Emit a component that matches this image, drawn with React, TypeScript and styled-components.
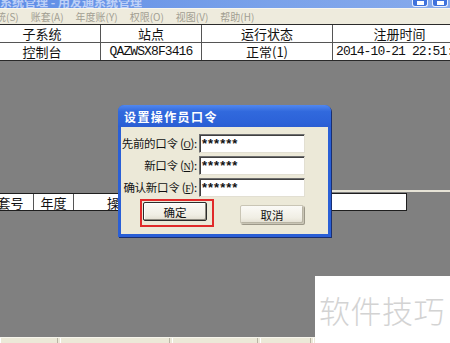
import React from 'react';
import styled, { createGlobalStyle } from 'styled-components';

const CJK = `"Noto Sans CJK SC", "Liberation Sans", sans-serif`;
const MONO = `"Liberation Mono", "Noto Sans CJK SC", monospace`;

const GlobalStyle = createGlobalStyle`
  html, body {
    margin: 0;
    padding: 0;
    background: #808080;
  }
  * {
    box-sizing: border-box;
  }
`;

const Window = styled.div`
  position: relative;
  width: 450px;
  height: 343px;
  overflow: hidden;
  display: flex;
  flex-direction: column;
  background: #808080;
  font-family: ${CJK};
`;

const TitleBar = styled.div`
  height: 8px;
  flex-shrink: 0;
  display: flex;
  align-items: flex-start;
  justify-content: space-between;
  background: linear-gradient(to right, #5f8de6, #7aa2ea 60%, #86aaec);
  overflow: hidden;
`;

const TitleText = styled.span`
  height: 8px;
  overflow: hidden;
  display: flex;
  align-items: flex-end;
  font-size: 12px;
  line-height: 12px;
  font-weight: bold;
  color: #e4ecff;
  white-space: nowrap;
  opacity: 0.7;
`;

const WinButtons = styled.div`
  display: flex;
  gap: 4px;
  margin-right: 2px;
`;

const WinButton = styled.span`
  width: 16px;
  height: 7px;
  border: 1px solid #e8efff;
  border-top: none;
  border-radius: 0 0 3px 3px;
  background: #3f72dc;
  display: flex;
  justify-content: center;
  align-items: flex-end;

  &::after {
    content: '';
    width: 7px;
    height: 4px;
    background: #fff;
    margin-bottom: 1px;
  }
`;

const MenuBar = styled.div`
  height: 16px;
  flex-shrink: 0;
  display: flex;
  align-items: center;
  gap: 12px;
  background: #eeebdd;
  border-top: 1px solid #f8f6ee;
  font-size: 10px;
  color: #a29e92;
  white-space: nowrap;
  overflow: hidden;
`;

const MenuItem = styled.span<{ $offset?: number }>`
  margin-left: ${p => p.$offset ?? 0}px;
  flex-shrink: 0;
`;

const Grid = styled.div<{ $cols: string }>`
  display: grid;
  grid-template-columns: ${p => p.$cols};
`;

const TopTable = styled.div`
  flex-shrink: 0;
  margin-left: -16px;
  background: #fff;
  border-top: 1px solid #2a2a2a;
  border-bottom: 1px solid #2a2a2a;
`;

const Cell = styled.div<{ $h: number; $mono?: boolean; $align?: string }>`
  height: ${p => p.$h}px;
  display: flex;
  align-items: center;
  justify-content: ${p => p.$align ?? 'center'};
  padding-left: ${p => (p.$align ? 3 : 0)}px;
  border-right: 1px solid #555;
  font-family: ${p => (p.$mono ? MONO : CJK)};
  font-size: 13px;
  letter-spacing: ${p => (p.$mono ? '-0.9px' : '0')};
  color: #111;
  white-space: nowrap;
  overflow: hidden;
`;

const RowLine = styled.div`
  border-bottom: 1px solid #555;
`;

const Workspace = styled.div`
  flex: 1;
  background: #808080;
  display: flex;
  flex-direction: column;
  padding-top: 129px;
`;

const FrameLine = styled.div`
  height: 2px;
  margin-left: 331px;
  background: #e6e3d6;
`;

const LowerTable = styled.div`
  margin-top: 1px;
  margin-left: -12px;
  width: 419px;
  background: #fff;
  border: 1px solid #1e1e1e;
  border-left: none;
  overflow: hidden;
`;

const StatusBar = styled.div`
  height: 6px;
  flex-shrink: 0;
  display: grid;
  grid-template-columns: 60px 112px 88px 53px 1fr;
  background: #ece9d8;
  border-top: 1px solid #f7f5ec;
`;

const StatusPanel = styled.div`
  border-left: 1px solid #fff;
  border-right: 1px solid #b9b5a5;
  margin-right: 2px;
`;

const Dialog = styled.div`
  position: absolute;
  left: 118px;
  top: 105px;
  width: 213px;
  height: 132px;
  display: flex;
  flex-direction: column;
  background: #2a5fd6;
  border-radius: 6px 6px 0 0;
  box-shadow: 1px 1px 0 #1a2f70;
`;

const DialogTitle = styled.div`
  height: 22px;
  flex-shrink: 0;
  display: flex;
  align-items: center;
  padding-left: 6px;
  border-radius: 6px 6px 0 0;
  background: linear-gradient(to bottom, #5187ee, #3169dd 30%, #2c62d8 80%, #2a5dd2);
  color: #fff;
  font-size: 12px;
  font-weight: bold;
  letter-spacing: 1.4px;
`;

const DialogBody = styled.div`
  flex: 1;
  margin: 0 3px 3px;
  background: #ece9d8;
  display: flex;
  flex-direction: column;
  padding-top: 5px;
`;

const FieldRow = styled.div`
  display: grid;
  grid-template-columns: 76px 106px;
  column-gap: 2px;
  align-items: center;
  height: 22px;
`;

const Label = styled.label`
  text-align: right;
  font-size: 11.5px;
  color: #111;
  white-space: nowrap;
  letter-spacing: -0.3px;

  & u {
    font-family: "Liberation Serif", serif;
    font-size: 10px;
  }
`;

const Input = styled.div`
  height: 19px;
  background: #fff;
  border-top: 1px solid #6f6f6f;
  border-left: 1px solid #6f6f6f;
  border-right: 1px solid #e2dfd2;
  border-bottom: 1px solid #e2dfd2;
  box-shadow: inset 1px 1px 0 #404040;
  padding: 2px 0 0 2px;
  font-family: "Liberation Sans", sans-serif;
  font-size: 13px;
  font-weight: bold;
  line-height: 14px;
  letter-spacing: 1px;
  color: #111;
`;

const ButtonRow = styled.div`
  display: flex;
  align-items: center;
  margin-top: 1px;
  padding-left: 19px;
  gap: 26px;
`;

const Highlight = styled.span`
  display: flex;
  border: 2px solid #e02a2a;
  padding: 1px 5px 4px 1px;
`;

const Button = styled.button<{ $default?: boolean }>`
  width: 64px;
  height: 19px;
  margin-top: ${p => (p.$default ? 0 : 3)}px;
  padding: 0;
  font-family: ${CJK};
  font-size: 11.5px;
  color: #111;
  background: linear-gradient(to bottom, #fbfaf6, #f0eee4 70%, #e2ded0);
  border: 1px solid ${p => (p.$default ? '#2b2b2b' : '#c9c5b5')};
  border-radius: 2px;
  box-shadow: ${p =>
    p.$default
      ? 'inset -1px -1px 0 #8d8a7f, inset 1px 1px 0 #fff'
      : 'inset -1px -1px 0 #b8b4a4, 1px 1px 0 #9c9889'};
`;

const Watermark = styled.div`
  position: absolute;
  right: 0;
  bottom: 0;
  width: 135px;
  height: 67px;
  background: #fff;
  display: flex;
  align-items: center;
  padding-left: 4px;
  font-size: 31px;
  font-weight: 300;
  color: #d3d3d3;
  letter-spacing: 0.5px;
`;

const topCols = '117px 101px 131px 134px';
const lowCols = '46px 40px 106px 227px';

export default function App() {
  return (
    <>
      <GlobalStyle />
      <Window>
        <TitleBar>
          <TitleText>系统管理 - 用友通系统管理</TitleText>
          <WinButtons>
            <WinButton />
            <WinButton />
          </WinButtons>
        </TitleBar>
        <MenuBar>
          <MenuItem $offset={-14}>系统(S)</MenuItem>
          <MenuItem>账套(A)</MenuItem>
          <MenuItem>年度账(Y)</MenuItem>
          <MenuItem>权限(O)</MenuItem>
          <MenuItem>视图(V)</MenuItem>
          <MenuItem>帮助(H)</MenuItem>
        </MenuBar>
        <TopTable>
          <RowLine>
            <Grid $cols={topCols}>
              <Cell $h={17}>子系统</Cell>
              <Cell $h={17}>站点</Cell>
              <Cell $h={17}>运行状态</Cell>
              <Cell $h={17}>注册时间</Cell>
            </Grid>
          </RowLine>
          <Grid $cols={topCols}>
            <Cell $h={17}>控制台</Cell>
            <Cell $h={17} $mono>QAZWSX8F3416</Cell>
            <Cell $h={17}>正常(1)</Cell>
            <Cell $h={17} $mono $align="flex-start">2014-10-21 22:51:</Cell>
          </Grid>
        </TopTable>
        <Workspace>
          <FrameLine />
          <LowerTable>
            <Grid $cols={lowCols}>
              <Cell $h={16}>套号</Cell>
              <Cell $h={16}>年度</Cell>
              <Cell $h={16}>操作员</Cell>
              <Cell $h={16} />
            </Grid>
          </LowerTable>
        </Workspace>
        <StatusBar>
          <StatusPanel />
          <StatusPanel />
          <StatusPanel />
          <StatusPanel />
          <StatusPanel />
        </StatusBar>

        <Dialog>
          <DialogTitle>设置操作员口令</DialogTitle>
          <DialogBody>
            <FieldRow>
              <Label>先前的口令 (<u>O</u>):</Label>
              <Input>******</Input>
            </FieldRow>
            <FieldRow>
              <Label>新口令 (<u>N</u>):</Label>
              <Input>******</Input>
            </FieldRow>
            <FieldRow>
              <Label>确认新口令 (<u>F</u>):</Label>
              <Input>******</Input>
            </FieldRow>
            <ButtonRow>
              <Highlight>
                <Button $default>确定</Button>
              </Highlight>
              <Button>取消</Button>
            </ButtonRow>
          </DialogBody>
        </Dialog>

        <Watermark>软件技巧</Watermark>
      </Window>
    </>
  );
}
